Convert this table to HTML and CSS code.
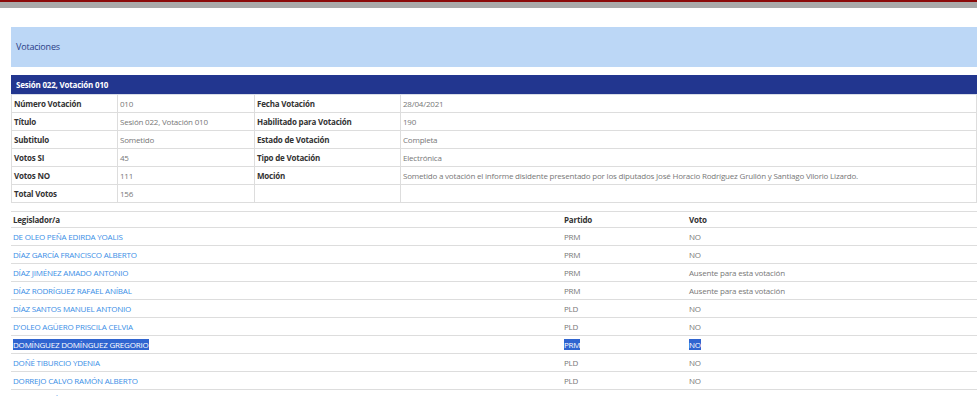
FILE: index.html
```html
<!DOCTYPE html>
<html lang="es">
<head>
  <meta charset="UTF-8" />
  <title>Votaciones</title>
  <link rel="stylesheet" href="styles.css">
</head>
<body>
  <div class="topbar"></div>
  <div class="page">
    <div class="panel-title">Votaciones</div>

    <div class="session-head">Sesión 022, Votación 010</div>
    <table class="info">
      <tr><th>Número Votación</th><td>010</td><th>Fecha Votación</th><td>28/04/2021</td></tr>
      <tr><th>Título</th><td>Sesión 022, Votación 010</td><th>Habilitado para Votación</th><td>190</td></tr>
      <tr><th>Subtitulo</th><td>Sometido</td><th>Estado de Votación</th><td>Completa</td></tr>
      <tr><th>Votos SI</th><td>45</td><th>Tipo de Votación</th><td>Electrónica</td></tr>
      <tr><th>Votos NO</th><td>111</td><th>Moción</th><td>Sometido a votación el informe disidente presentado por los diputados José Horacio Rodríguez Grullón y Santiago Vilorio Lizardo.</td></tr>
      <tr><th>Total Votos</th><td>156</td><th></th><td></td></tr>
    </table>

    <table class="votes">
      <thead>
        <tr><th class="c-name">Legislador/a</th><th class="c-party">Partido</th><th>Voto</th></tr>
      </thead>
      <tbody>
        <tr><td><a href="#">DE OLEO PEÑA EDIRDA YOALIS</a></td><td>PRM</td><td>NO</td></tr>
        <tr><td><a href="#">DÍAZ GARCÍA FRANCISCO ALBERTO</a></td><td>PRM</td><td>NO</td></tr>
        <tr><td><a href="#">DÍAZ JIMÉNEZ AMADO ANTONIO</a></td><td>PRM</td><td>Ausente para esta votación</td></tr>
        <tr><td><a href="#">DÍAZ RODRÍGUEZ RAFAEL ANÍBAL</a></td><td>PRM</td><td>Ausente para esta votación</td></tr>
        <tr><td><a href="#">DÍAZ SANTOS MANUEL ANTONIO</a></td><td>PLD</td><td>NO</td></tr>
        <tr><td><a href="#">D'OLEO AGÜERO PRISCILA CELVIA</a></td><td>PLD</td><td>NO</td></tr>
        <tr><td><a href="#"><span class="sel">DOMÍNGUEZ DOMÍNGUEZ GREGORIO</span></a></td><td><span class="sel">PRM</span></td><td><span class="sel">NO</span></td></tr>
        <tr><td><a href="#">DOÑÉ TIBURCIO YDENIA</a></td><td>PLD</td><td>NO</td></tr>
        <tr><td><a href="#">DORREJO CALVO RAMÓN ALBERTO</a></td><td>PLD</td><td>NO</td></tr>
        <tr><td><a href="#">DUARTE SUÁREZ PABLO</a></td><td>PRM</td><td>SI</td></tr>
      </tbody>
    </table>
  </div>
</body>
</html>
```

FILE: styles.css
```css
body {
  margin: 0;
  font-family: 'Open Sans', sans-serif;
  font-size: 8px;
  letter-spacing: -0.2px;
  color: #333;
  background: white;
  overflow: hidden;
}

.topbar {
  height: 6px;
  background: #aaa;
  border-top: 2px solid #8b0a0a;
}

.page {
  padding: 19px 0 0 11px;
}

.panel-title {
  background: #bcd7f6;
  color: #2a3d86;
  font-size: 9px;
  height: 40px;
  line-height: 40px;
  padding-left: 5px;
  margin-bottom: 8px;
}

.session-head {
  background: #22368f;
  color: white;
  font-weight: bold;
  height: 20px;
  line-height: 20px;
  padding-left: 5px;
  border-bottom: 1px solid #d8dde8;
  box-sizing: border-box;
}

table {
  border-collapse: collapse;
  width: 100%;
}

.info {
  margin-bottom: 8px;
}

.info th,
.info td {
  height: 17px;
  padding: 0 2px;
  border: 1px solid #ddd;
  border-top: none;
  text-align: left;
  vertical-align: middle;
  white-space: nowrap;
}

.info th {
  font-weight: bold;
  color: #333;
}

.info td {
  color: #777;
}

.info tr > :nth-child(1) { width: 101px; }
.info tr > :nth-child(2) { width: 132px; }
.info tr > :nth-child(3) { width: 141px; }

.votes th,
.votes td {
  height: 17px;
  padding: 0 2px;
  border-top: 1px solid #ddd;
  text-align: left;
  vertical-align: middle;
  white-space: nowrap;
  color: #777;
}

.votes th {
  height: 15px;
  font-weight: bold;
  color: #333;
}

.votes .c-name { width: 547px; }
.votes .c-party { width: 121px; }

.votes a {
  color: #3a8ee6;
  text-decoration: none;
}

.sel {
  background: #3065d0;
  color: white;
}
```
